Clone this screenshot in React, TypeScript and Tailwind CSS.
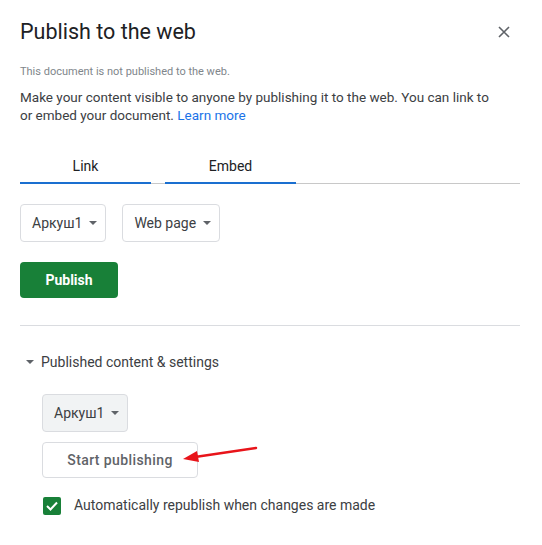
import React from 'react'

function Caret({ className = '' }: { className?: string }) {
  return (
    <svg width="8" height="4" viewBox="0 0 8 4" className={className}>
      <path d="M0 0 L8 0 L4 4 Z" fill="currentColor" />
    </svg>
  )
}

function Select({ label, gray = false }: { label: string; gray?: boolean }) {
  return (
    <div
      className={
        'flex items-center h-[38px] pl-[11px] pr-[8px] rounded-[4px] border border-[#dadce0] text-[14px] text-[#3c4043] ' +
        (gray ? 'bg-[#f1f3f4]' : 'bg-white')
      }
    >
      <span>{label}</span>
      <Caret className="ml-[7px] text-[#5f6368]" />
    </div>
  )
}

export default function App() {
  return (
    <div
      className="relative w-[542px] h-[545px] bg-white pl-5 pr-[22px] pt-[17px]"
      style={{ fontFamily: 'Roboto, "Liberation Sans", sans-serif' }}
    >
      {/* header */}
      <div className="flex items-center justify-between h-[30px]">
        <h1 className="text-[21.5px] text-[#202124] font-normal">Publish to the web</h1>
        <button className="mr-[10px] text-[#5f6368]">
          <svg width="12" height="12" viewBox="0 0 12 12">
            <path d="M1 1 L11 11 M11 1 L1 11" stroke="currentColor" strokeWidth="1.6" />
          </svg>
        </button>
      </div>

      <p className="mt-[18px] text-[11px] leading-[14px] text-[#80868b]">This document is not published to the web.</p>
      <p className="mt-[9px] text-[13.5px] leading-[18px] text-[#3c4043]">
        Make your content visible to anyone by publishing it to the web. You can link to
        <br />
        or embed your document. <a className="text-[#1a73e8]">Learn more</a>
      </p>

      {/* tabs */}
      <div className="mt-[32px] flex border-b border-[#c8c8c8]">
        <div className="w-[131px] pb-[5px] text-center text-[14px] text-[#202124] border-b-2 border-[#1a6fd0] -mb-px">Link</div>
        <div className="ml-[14px] w-[131px] pb-[5px] text-center text-[14px] text-[#202124] border-b-2 border-[#1a6fd0] -mb-px">Embed</div>
      </div>

      <div className="mt-[20px] flex gap-[16px]">
        <Select label="Аркуш1" />
        <Select label="Web page" />
      </div>

      <button className="mt-[20px] w-[98px] h-[36px] rounded-[4px] bg-[#188038] text-white text-[14px] font-bold">
        Publish
      </button>

      <div className="mt-[27px] h-px bg-[#dadce0]" />

      {/* published content */}
      <div className="mt-[26px] flex items-center h-[20px]">
        <Caret className="ml-[6px] text-[#5f6368]" />
        <span className="ml-[7px] text-[14px] text-[#3c4043]">Published content &amp; settings</span>
      </div>

      <div className="ml-[22px]">
        <div className="mt-[22px] flex">
          <Select label="Аркуш1" gray />
        </div>
        <button className="mt-[10px] w-[156px] h-[36px] rounded-[4px] border border-[#dadce0] bg-white text-[14px] font-medium text-[#5f6368] tracking-[0.4px]">
          Start publishing
        </button>
        <div className="mt-[17px] flex items-center">
          <div className="w-[18px] h-[18px] rounded-[2px] bg-[#188038] flex items-center justify-center ml-px">
            <svg width="12" height="10" viewBox="0 0 12 10">
              <path d="M1 5 L4.5 8.5 L11 1.5" stroke="white" strokeWidth="2" fill="none" />
            </svg>
          </div>
          <span className="ml-[13px] text-[14px] text-[#3c4043]">Automatically republish when changes are made</span>
        </div>
      </div>

      {/* annotation arrow */}
      <svg className="absolute left-[180px] top-[440px]" width="80" height="28" viewBox="0 0 80 28">
        <path d="M76 8 L15 17" stroke="#e8141a" strokeWidth="2.5" strokeLinecap="round" />
        <path d="M3 19 L17 11 L19 22 Z" fill="#e8141a" />
      </svg>
    </div>
  )
}
